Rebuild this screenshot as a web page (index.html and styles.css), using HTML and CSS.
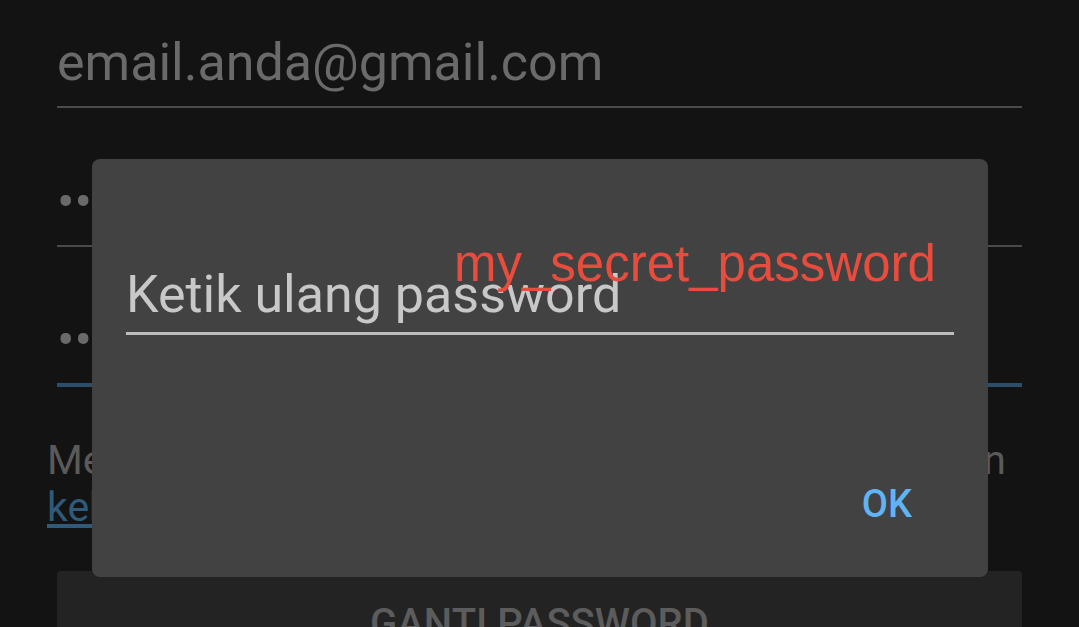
FILE: index.html
```html
<!DOCTYPE html>
<html lang="id">
<head>
<meta charset="UTF-8">
<title>Ganti Password</title>
<link rel="stylesheet" href="styles.css">
</head>
<body>

<!-- form di belakang dialog -->
<div class="form">
  <div class="field field-first">
    <span class="field-text">email.anda@gmail.com</span>
  </div>
  <div class="field field-second">
    <span class="field-dots">••••••••••••••••••••</span>
  </div>
  <div class="field field-focus">
    <span class="field-dots">••••••••••••••••••••</span>
  </div>

  <p class="hint">
    Mengubah password Anda berarti setuju dengan
    <a href="#">kebijakan privasi</a> kami.
  </p>

  <button class="submit">GANTI PASSWORD</button>
</div>

<!-- dialog ketik ulang password -->
<div class="dialog">
  <div class="dialog-input">Ketik ulang password</div>
  <div class="dialog-actions">
    <span class="dialog-ok">OK</span>
  </div>
</div>

<!-- anotasi merah -->
<div class="note">my_secret_password</div>

</body>
</html>
```

FILE: styles.css
```css
body {
  margin: 0;
  background-color: #131313;
  font-family: Roboto, "Noto Sans", sans-serif;
  overflow: hidden;
}

.form {
  padding: 0 57px;
}

.field {
  display: flex;
  align-items: flex-end;
  border-bottom: 2px solid #4a4a4a;
}

.field-first {
  height: 106px;
}

.field-second {
  height: 137px;
}

.field-focus {
  height: 136px;
  border-bottom: 4px solid #2c4e69;
}

.field-text {
  font-size: 52px;
  line-height: 60px;
  color: #6a6a6a;
  padding-bottom: 13px;
}

.field-dots {
  font-size: 52px;
  line-height: 52px;
  color: #6a6a6a;
  padding-bottom: 16px;
  white-space: nowrap;
  overflow: hidden;
}

.hint {
  margin: 50px 16px 0 -10px;
  font-size: 41px;
  line-height: 47px;
  color: #5a5a5a;
  text-align: justify;
}

.hint a {
  color: #2f5a79;
}

.submit {
  display: block;
  width: 100%;
  margin-top: 40px;
  padding: 33px 0 40px;
  border: none;
  border-radius: 4px;
  background-color: #232323;
  color: #5c5c5c;
  font-family: Roboto, sans-serif;
  font-size: 40px;
  line-height: 40px;
  font-weight: 500;
}

/* dialog di atas form */
.dialog {
  position: absolute;
  left: 92px;
  top: 159px;
  width: 896px;
  height: 418px;
  box-sizing: border-box;
  padding: 0 34px;
  background-color: #424242;
  border-radius: 8px;
  display: flex;
  flex-direction: column;
}

.dialog-input {
  margin-top: 106px;
  font-size: 52px;
  line-height: 60px;
  color: #c8c8c8;
  padding: 0 0 7px 0;
  border-bottom: 3px solid #bdbdbd;
}

.dialog-actions {
  display: flex;
  justify-content: flex-end;
  margin-top: auto;
  padding: 0 42px 51px 0;
}

.dialog-ok {
  font-size: 38px;
  font-weight: 500;
  color: #61b4f4;
}

.note {
  position: absolute;
  left: 454px;
  top: 239px;
  font-family: "Liberation Sans", Arial, sans-serif;
  font-size: 51px;
  line-height: 50px;
  color: #e84c3d;
}
```
